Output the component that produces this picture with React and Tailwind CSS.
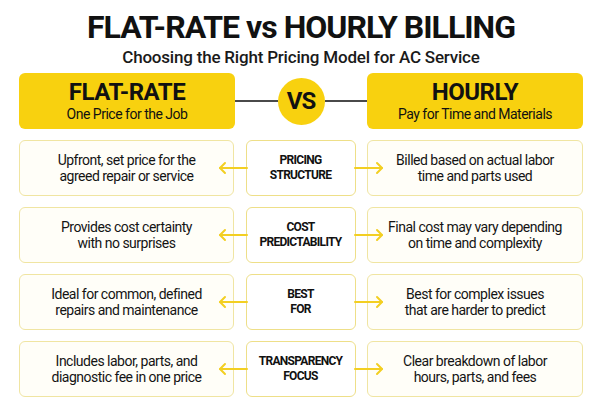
import React from 'react';

const rows = [
    {
        label: ['PRICING', 'STRUCTURE'],
        left: ['Upfront, set price for the', 'agreed repair or service'],
        right: ['Billed based on actual labor', 'time and parts used'],
    },
    {
        label: ['COST', 'PREDICTABILITY'],
        left: ['Provides cost certainty', 'with no surprises'],
        right: ['Final cost may vary depending', 'on time and complexity'],
    },
    {
        label: ['BEST', 'FOR'],
        left: ['Ideal for common, defined', 'repairs and maintenance'],
        right: ['Best for complex issues', 'that are harder to predict'],
    },
    {
        label: ['TRANSPARENCY', 'FOCUS'],
        left: ['Includes labor, parts, and', 'diagnostic fee in one price'],
        right: ['Clear breakdown of labor', 'hours, parts, and fees'],
    },
];

const Arrow = ({ dir }) => (
    <svg
        width="30"
        height="14"
        viewBox="0 0 30 14"
        className={`absolute top-1/2 -translate-y-1/2 z-10 ${dir === 'left' ? '-left-[29px]' : '-right-[29px] rotate-180'}`}
        fill="none"
        stroke="#f3cf22"
        strokeWidth="2"
        strokeLinecap="round"
        strokeLinejoin="round"
    >
        <path d="M29 7H2" />
        <path d="M7 2L2 7l5 5" />
    </svg>
);

const SideCell = ({ lines }) => (
    <div className="h-full rounded-md border border-[#f0e5a2] bg-[#fffef8] flex flex-col items-center justify-center text-[14px] leading-[16px] tracking-[-0.5px] text-[#141414]">
        {lines.map((l, i) => (
            <span key={i}>{l}</span>
        ))}
    </div>
);

export default function App() {
    return (
        <div className="w-[602px] h-[414px] bg-white overflow-hidden font-['Roboto',sans-serif] text-[#111]">
            {/* Title */}
            <div className="pt-[10px] text-center">
                <h1 className="text-[32px] leading-[34px] font-bold tracking-[-1px]">FLAT-RATE vs HOURLY BILLING</h1>
                <p className="mt-[3px] text-[17px] leading-[20px] font-medium tracking-[-0.2px] text-[#1a1a1a]">
                    Choosing the Right Pricing Model for AC Service
                </p>
            </div>

            {/* Header */}
            <div className="mt-[6px] px-[19px] grid grid-cols-[216px_132px_216px] h-[56px]">
                <div className="rounded-md bg-[#f8d10f] flex flex-col items-center justify-center">
                    <span className="text-[24px] leading-[25px] font-bold tracking-[-0.5px]">FLAT-RATE</span>
                    <span className="text-[14px] leading-[18px] tracking-[-0.5px]">One Price for the Job</span>
                </div>
                <div className="flex items-center">
                    <div className="flex-1 h-[1.5px] bg-[#4a4a4a]" />
                    <div className="w-[47px] h-[47px] rounded-full bg-[#f8d10f] flex items-center justify-center text-[24px] font-bold tracking-[-1px]">
                        VS
                    </div>
                    <div className="flex-1 h-[1.5px] bg-[#4a4a4a]" />
                </div>
                <div className="rounded-md bg-[#f8d10f] flex flex-col items-center justify-center">
                    <span className="text-[24px] leading-[25px] font-bold tracking-[-0.5px]">HOURLY</span>
                    <span className="text-[14px] leading-[18px] tracking-[-0.5px]">Pay for Time and Materials</span>
                </div>
            </div>

            {/* Comparison rows */}
            <div className="mt-[11px] px-[19px] flex flex-col gap-[11px]">
                {rows.map((r, i) => (
                    <div key={i} className="flex justify-between h-[56px]">
                        <div className="w-[215px]">
                            <SideCell lines={r.left} />
                        </div>
                        <div className="relative w-[110px] rounded-md border border-[#eedf88] bg-white flex flex-col items-center justify-center text-[12px] leading-[15px] font-bold tracking-[-0.7px]">
                            <Arrow dir="left" />
                            {r.label.map((l, j) => (
                                <span key={j}>{l}</span>
                            ))}
                            <Arrow dir="right" />
                        </div>
                        <div className="w-[216px]">
                            <SideCell lines={r.right} />
                        </div>
                    </div>
                ))}
            </div>
        </div>
    );
}
